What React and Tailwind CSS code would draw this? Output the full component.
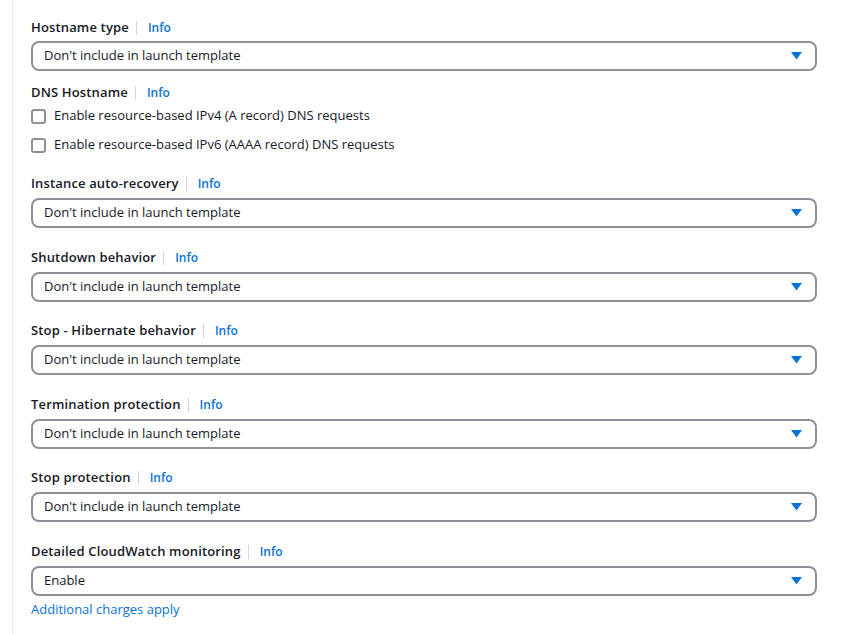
import React from 'react';

const fields = [
  { label: 'Instance auto-recovery', value: "Don't include in launch template" },
  { label: 'Shutdown behavior', value: "Don't include in launch template" },
  { label: 'Stop - Hibernate behavior', value: "Don't include in launch template" },
  { label: 'Termination protection', value: "Don't include in launch template" },
  { label: 'Stop protection', value: "Don't include in launch template" },
  { label: 'Detailed CloudWatch monitoring', value: 'Enable' },
];

const Label = ({ children }) => (
  <div className="flex items-center h-5">
    <span className="text-[13px] font-semibold tracking-[0.15px] text-[#16191f]">{children}</span>
    <span className="ml-[7px] mr-[11px] h-[14px] w-px bg-[#d1d5db]"></span>
    <span className="text-[12px] font-semibold text-[#0972d3]">Info</span>
  </div>
);

const Select = ({ value }) => (
  <div className="flex items-center justify-between h-[30px] rounded-[8px] border-2 border-[#8d9096] bg-white pl-[11px] pr-[13px]">
    <span className="text-[13px] text-[#16191f]">{value}</span>
    <svg width="11" height="8" viewBox="0 0 11 8">
      <path d="M0 0 H11 L5.5 7.5 Z" fill="#0972d3" />
    </svg>
  </div>
);

const Checkbox = ({ text }) => (
  <div className="flex items-center h-5">
    <span className="w-[15px] h-[15px] rounded-[3px] border-2 border-[#8d9096] bg-white"></span>
    <span className="ml-[8px] text-[13px] text-[#16191f]">{text}</span>
  </div>
);

const App = () => {
  return (
    <main className="min-h-screen bg-white" style={{ fontFamily: '"Open Sans", "Liberation Sans", sans-serif' }}>
      <div className="ml-[12px] min-h-[634px] border-l border-[#e9ebed] pl-[18px] pr-[34px] pt-[18px]">
        <section>
          <Label>Hostname type</Label>
          <div className="mt-[3px]">
            <Select value="Don't include in launch template" />
          </div>
        </section>

        <section className="mt-[12px]">
          <Label>DNS Hostname</Label>
          <div className="mt-[3px] flex flex-col gap-[9px]">
            <Checkbox text="Enable resource-based IPv4 (A record) DNS requests" />
            <Checkbox text="Enable resource-based IPv6 (AAAA record) DNS requests" />
          </div>
        </section>

        <div className="mt-[19px] flex flex-col gap-[19.5px]">
          {fields.map((f) => (
            <section key={f.label}>
              <Label>{f.label}</Label>
              <div className="mt-[4px]">
                <Select value={f.value} />
              </div>
            </section>
          ))}
        </div>

        <p className="mt-[4px] text-[13px] text-[#0972d3]">Additional charges apply</p>
      </div>
    </main>
  );
};

export default App;
